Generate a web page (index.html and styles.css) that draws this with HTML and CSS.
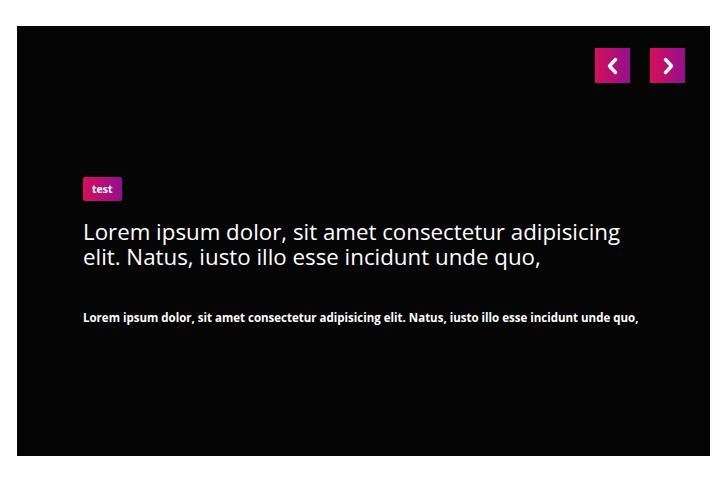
FILE: index.html
```html
<!DOCTYPE html>
<html>
<head>
<meta charset="utf-8">
<link rel="stylesheet" href="styles.css">
</head>
<body>
<div class="slider">
  <div class="nav">
    <button class="nav-btn" aria-label="Previous">
      <svg width="16" height="18" viewBox="0 0 16 18"><path d="M10.5 2.5 L4.5 9 L10.5 15.5" fill="none" stroke="#fff" stroke-width="3.4" stroke-linecap="round" stroke-linejoin="round"/></svg>
    </button>
    <button class="nav-btn" aria-label="Next">
      <svg width="16" height="18" viewBox="0 0 16 18"><path d="M5.5 2.5 L11.5 9 L5.5 15.5" fill="none" stroke="#fff" stroke-width="3.4" stroke-linecap="round" stroke-linejoin="round"/></svg>
    </button>
  </div>
  <div class="content">
    <span class="tag">test</span>
    <h1 class="title">Lorem ipsum dolor, sit amet consectetur adipisicing elit. Natus, iusto illo esse incidunt unde quo,</h1>
    <p class="desc">Lorem ipsum dolor, sit amet consectetur adipisicing elit. Natus, iusto illo esse incidunt unde quo,</p>
  </div>
</div>
</body>
</html>
```

FILE: styles.css
```css
html, body {
  margin: 0;
  padding: 0;
  background: #fff;
}
body {
  padding: 26px 18px 33px 17px;
  font-family: "Open Sans", "Liberation Sans", sans-serif;
}
.slider {
  width: 693px;
  height: 430px;
  background: #050505;
  box-sizing: border-box;
  padding: 22px 25px 0 66px;
  display: flex;
  flex-direction: column;
}
.nav {
  display: flex;
  justify-content: flex-end;
  gap: 20px;
}
.nav-btn {
  width: 35px;
  height: 35px;
  border: 0;
  padding: 0;
  background: linear-gradient(90deg, #d6105a, #930f8f);
  display: flex;
  align-items: center;
  justify-content: center;
  cursor: pointer;
}
.content {
  margin-top: 94px;
  width: 575px;
}
.tag {
  display: inline-block;
  height: 24px;
  line-height: 24px;
  padding: 0 9px;
  border-radius: 2px;
  background: linear-gradient(90deg, #d6105a, #930f8f);
  color: #fff;
  font-size: 10.5px;
  font-weight: 700;
  vertical-align: top;
}
.title {
  margin: 18px 0 0;
  color: #fff;
  font-size: 22.3px;
  font-weight: 400;
  line-height: 25px;
}
.desc {
  margin: 41px 0 0;
  color: #fff;
  font-size: 11.5px;
  font-weight: 700;
  width: 610px;
  line-height: 16px;
}
```
